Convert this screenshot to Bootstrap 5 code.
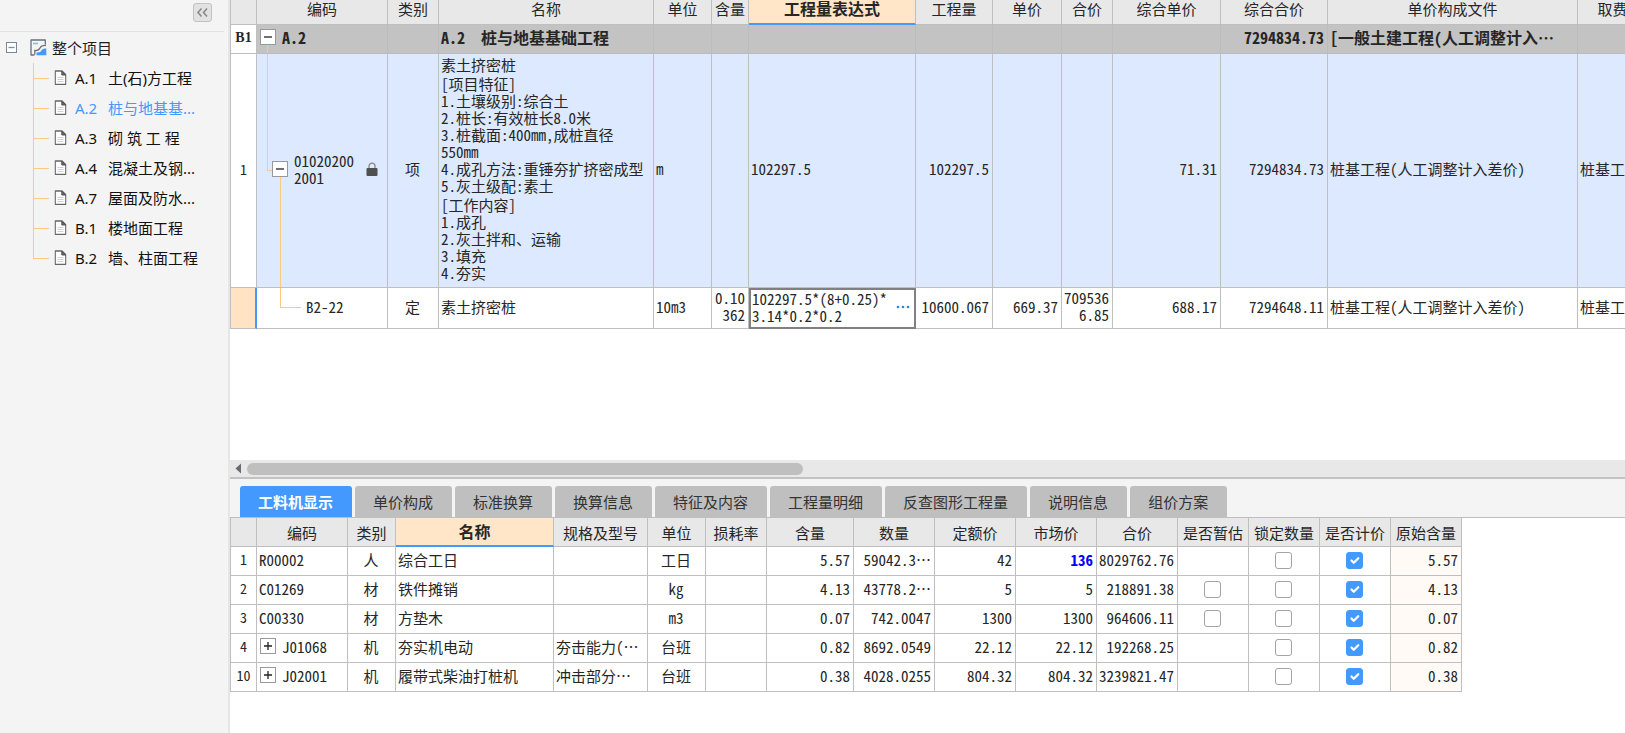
<!DOCTYPE html>
<html lang="zh-CN">
<head>
<meta charset="utf-8">
<meta name="viewport" content="width=device-width, initial-scale=1">
<title>工程量清单</title>
<link href="https://cdn.jsdelivr.net/npm/bootstrap@5.3.0/dist/css/bootstrap.min.css" rel="stylesheet">
<style>
  :root { --line: #bfbfbf; --accent: #4499ff; --pick: #ffe6c9; --twig: #ffc880; }
  body { font-family: "Noto Sans", "Noto Sans CJK SC", sans-serif; font-size: 15px; line-height: 20px; color: #1e1e1e; background: #fff; }

  /* project tree */
  .side { width: 230px; background: #f4f4f4; border-right: 2px solid #e6e6e6; }
  .side-head { height: 32px; margin-right: 4px; border-bottom: 1px solid #e2e2e2; padding: 3px 12px 0 0; }
  .fold { width: 19px; height: 19px; padding: 0; border: 1px solid #c2c2c2; border-radius: 3px; background: #e2e2e2; line-height: 0; }
  .tree-root { height: 31px; padding-left: 6px; }
  .tree-root button { width: 11px; height: 11px; padding: 0; border: 1px solid #7d8794; background: #fff; line-height: 0; }
  .tree-root svg.project { margin: 0 5px 0 13px; }
  .tree { margin: 0 0 0 33px; }
  .tree li { position: relative; height: 30px; padding-left: 21px; }
  .tree li::before { content: ""; position: absolute; left: 0; top: 0; bottom: 0; border-left: 1px solid var(--twig); }
  .tree li:last-child::before { bottom: 50%; }
  .tree li::after { content: ""; position: absolute; left: 0; top: 50%; width: 16px; border-top: 1px solid var(--twig); }
  .tree a { color: #111; text-decoration: none; }
  .tree a.current { color: var(--accent); }
  .tree .code { width: 33px; }

  /* data grids */
  .sheet { table-layout: fixed; border-collapse: separate; border-spacing: 0; font-family: "Noto Sans CJK SC", sans-serif; font-feature-settings: "hwid" 1; line-height: 17px; color: #262626; }
  .sheet th, .sheet td { border: 0 solid var(--line); border-width: 0 1px 1px 0; padding: 0 3px 4px 2px; overflow: hidden; white-space: nowrap; vertical-align: middle; }
  .sheet th:first-child { border-left-width: 1px; padding: 0 0 3px; text-align: center; }
  .sheet thead th { background: #e8e8e8; font-weight: 400; text-align: center; padding: 0; }
  .sheet thead th.picked { background: var(--pick); font-weight: 700; font-size: 16px; border-bottom: 2px solid var(--accent); }
  .sheet tbody th { background: #fff; font-weight: 400; font-size: 14px; }
  .sheet .wrap { white-space: normal; word-break: break-all; }
  .bill { width: 1448px; }
  .bill thead tr { height: 25px; }
  .bill thead th { vertical-align: top; }
  .bill .branch { height: 29px; font-size: 16px; font-weight: 700; }
  .bill .branch td { background: #c3c3c3; border-color: #bcbcbc; }
  .bill .branch th { font-family: "Liberation Serif", serif; font-weight: 700; }
  .bill .item { height: 234px; }
  .bill .item td { background: #dce9fe; }
  .bill .norm { height: 41px; }
  .bill .norm th { background: #ffe3c3; border-right: 2px solid var(--accent); }
  .bill .norm .editing { border: 2px solid #808080; padding: 0 2px 3px 1px; }
  .more { border: 0; background: none; padding: 0 2px; color: #2f86d6; line-height: 0; }
  .res { width: 1232px; }
  .res tr { height: 29px; }
  .res .base { background: #fffaf5; }
  .res .form-check-input { width: 17px; height: 17px; margin: 0; border-color: #a3a3a3; border-radius: 3px; vertical-align: middle; }
  .res .form-check-input:checked { background-color: var(--accent); border-color: var(--accent); }
  .knob { width: 16px; height: 16px; margin: 0 6px 0 1px; padding: 0; border: 1px solid #999; background: #fff; line-height: 0; flex: none; position: relative; z-index: 1; }
  td.limb { position: relative; }
  .twig { position: absolute; border: 0 solid var(--twig); border-left-width: 1px; }
  .twig-a { left: 10px; top: 50%; bottom: 0; }
  .twig-b { left: 10px; top: 0; bottom: 50%; width: 8px; border-bottom-width: 1px; }
  .twig-c { left: 23px; top: 50%; bottom: 0; }
  .twig-d { left: 23px; top: 0; bottom: 50%; width: 21px; border-bottom-width: 1px; }
  .lv2 { padding-left: 12px; }
  .lv3 { padding-left: 47px; }
  .digits { width: 64px; }
  .clauses { gap: 2px; }

  /* horizontal scroll strip and tabs */
  .strip { height: 19px; background: #e8e8e8; border-bottom: 2px solid #c2c2c2; padding-left: 4px; gap: 2px; }
  .thumb { width: 40%; height: 12px; border-radius: 6px; background: #bfbfbf; }
  .pane { min-height: 254px; }
  .tabs { background: #f4f4f4; border-bottom: 1px solid var(--line); padding: 7px 0 0 10px; gap: 3px; }
  .tabs button { height: 31px; border: 0; border-radius: 3px 3px 0 0; background: #bfbfbf; color: #333; padding: 0 19px 0 18px; }
  .tabs button.active { background: var(--accent); color: #fff; font-weight: 700; }
</style>
</head>
<body>
<div class="d-flex vh-100 overflow-hidden">
  <nav class="side flex-shrink-0" aria-label="项目结构">
    <div class="side-head d-flex justify-content-end align-items-start">
      <button class="fold" type="button" aria-label="收起">
        <svg width="15" height="15" viewBox="0 0 15 15" fill="none" stroke="#8a8a8a" stroke-width="1.6"><path d="M6.500 3.500 3 7.500l3.500 4M12 3.500 8.500 7.500l3.500 4"/></svg>
      </button>
    </div>
    <div class="tree-root d-flex align-items-center">
      <button type="button" aria-label="折叠"><svg width="9" height="9" viewBox="0 0 9 9"><path d="M1.500 4.500h6" stroke="#3aa0e8" stroke-width="1.300"/></svg></button>
      <svg class="project" width="17" height="17" viewBox="0 0 17 17" fill="none"><path d="M15.300 5.500V1H1v15h3.500" stroke="#6b7078" stroke-width="1.300" stroke-linejoin="round"/><path d="M3 4.500h5" stroke="#7cc0ff" stroke-width="1.600"/><path d="M4.800 15.500V11.500q4 .3 5.200-2.500t6-2.500" stroke="#6b7078" stroke-width="1.300"/><path d="M6.500 16.300v-2.800q4.200.3 5.200-2.500 1.200-2 4.600-1.500v6.800z" fill="#4499ff"/></svg>
      <span>整个项目</span>
    </div>
    <ul class="tree list-unstyled">
      <li class="d-flex align-items-center"><svg class="me-2" width="13" height="16" viewBox="0 0 12 16"><use href="#doc"/></svg><a class="d-flex" href="#"><span class="code">A.1</span><span>土(石)方工程</span></a></li>
      <li class="d-flex align-items-center"><svg class="me-2" width="13" height="16" viewBox="0 0 12 16"><use href="#doc"/></svg><a class="d-flex current" href="#"><span class="code">A.2</span><span>桩与地基基...</span></a></li>
      <li class="d-flex align-items-center"><svg class="me-2" width="13" height="16" viewBox="0 0 12 16"><use href="#doc"/></svg><a class="d-flex" href="#"><span class="code">A.3</span><span>砌 筑 工 程</span></a></li>
      <li class="d-flex align-items-center"><svg class="me-2" width="13" height="16" viewBox="0 0 12 16"><use href="#doc"/></svg><a class="d-flex" href="#"><span class="code">A.4</span><span>混凝土及钢...</span></a></li>
      <li class="d-flex align-items-center"><svg class="me-2" width="13" height="16" viewBox="0 0 12 16"><use href="#doc"/></svg><a class="d-flex" href="#"><span class="code">A.7</span><span>屋面及防水...</span></a></li>
      <li class="d-flex align-items-center"><svg class="me-2" width="13" height="16" viewBox="0 0 12 16"><use href="#doc"/></svg><a class="d-flex" href="#"><span class="code">B.1</span><span>楼地面工程</span></a></li>
      <li class="d-flex align-items-center"><svg class="me-2" width="13" height="16" viewBox="0 0 12 16"><use href="#doc"/></svg><a class="d-flex" href="#"><span class="code">B.2</span><span>墙、柱面工程</span></a></li>
    </ul>
    <svg class="d-none">
      <symbol id="doc" viewBox="0 0 12 16"><path d="M.7 1h6.800l3.800 3.800v9.500H.7z" fill="#fff" stroke="#666" stroke-width="1.300" stroke-linejoin="round"/><path d="M7.300 1v4h4z" fill="#666" stroke="#555"/><path d="M3 7.500h6M3 9.500h6M3 11.500h6" stroke="#d0d0d0"/></symbol>
    </svg>
  </nav>

  <main class="d-flex flex-column flex-grow-1 overflow-hidden">
    <section class="flex-grow-1 overflow-hidden">
      <table class="sheet bill">
        <colgroup><col style="width:27px"><col style="width:131px"><col style="width:51px"><col style="width:215px"><col style="width:58px"><col style="width:37px"><col style="width:167px"><col style="width:77px"><col style="width:69px"><col style="width:51px"><col style="width:108px"><col style="width:107px"><col style="width:250px"><col style="width:100px"></colgroup>
        <thead>
          <tr><th></th><th>编码</th><th>类别</th><th>名称</th><th>单位</th><th>含量</th><th class="picked">工程量表达式</th><th>工程量</th><th>单价</th><th>合价</th><th>综合单价</th><th>综合合价</th><th>单价构成文件</th><th>取费专业</th></tr>
        </thead>
        <tbody>
          <tr class="branch">
            <th>B1</th>
            <td class="limb"><span class="twig twig-a"></span><div class="d-flex align-items-center"><button class="knob" type="button" aria-label="折叠"><svg width="14" height="14" viewBox="0 0 14 14"><path d="M3 7h8" stroke="#222" stroke-width="1.300"/></svg></button><span>A.2</span></div></td>
            <td></td><td>A.2&nbsp;&nbsp;桩与地基基础工程</td><td></td><td></td><td></td><td></td><td></td><td></td><td></td>
            <td class="text-end">7294834.73</td><td>[一般土建工程(人工调整计入⋯</td><td></td>
          </tr>
          <tr class="item">
            <th>1</th>
            <td class="limb"><span class="twig twig-b"></span><span class="twig twig-c"></span><div class="lv2 d-flex align-items-center"><button class="knob" type="button" aria-label="折叠"><svg width="14" height="14" viewBox="0 0 14 14"><path d="M3 7h8" stroke="#222" stroke-width="1.300"/></svg></button><span class="digits wrap">010202002001</span><svg class="ms-2" width="12" height="14" viewBox="0 0 12 14"><path d="M3 7V4.200a3 3 0 0 1 6 0V7" fill="none" stroke="#888" stroke-width="1.300"/><rect x=".5" y="6" width="11" height="8" rx="1" fill="#505050"/></svg></div></td>
            <td class="text-center">项</td>
            <td class="wrap"><div class="clauses d-grid"><div>素土挤密桩</div><div>[项目特征]<br>1.土壤级别:综合土<br>2.桩长:有效桩长8.0米<br>3.桩截面:400mm,成桩直径<br>550mm<br>4.成孔方法:重锤夯扩挤密成型<br>5.灰土级配:素土</div><div>[工作内容]<br>1.成孔<br>2.灰土拌和、运输<br>3.填充<br>4.夯实</div></div></td>
            <td>m</td><td></td><td>102297.5</td><td class="text-end">102297.5</td><td></td><td></td>
            <td class="text-end">71.31</td><td class="text-end">7294834.73</td><td>桩基工程(人工调整计入差价)</td><td>桩基工程</td>
          </tr>
          <tr class="norm">
            <th></th>
            <td class="limb"><span class="twig twig-d"></span><div class="lv3">B2-22</div></td>
            <td class="text-center">定</td><td>素土挤密桩</td><td>10m3</td><td class="wrap text-end">0.10362</td>
            <td class="editing"><div class="d-flex align-items-center justify-content-between"><span>102297.5*(8+0.25)*<br>3.14*0.2*0.2</span><button class="more" type="button" aria-label="编辑表达式"><svg width="14" height="4" viewBox="0 0 14 4" fill="currentColor"><circle cx="2" cy="2" r="1.300"/><circle cx="7" cy="2" r="1.300"/><circle cx="12" cy="2" r="1.300"/></svg></button></div></td>
            <td class="text-end">10600.067</td><td class="text-end">669.37</td><td class="wrap text-end">7095366.85</td>
            <td class="text-end">688.17</td><td class="text-end">7294648.11</td><td>桩基工程(人工调整计入差价)</td><td>桩基工程</td>
          </tr>
        </tbody>
      </table>
    </section>

    <div class="strip d-flex align-items-center flex-shrink-0">
      <svg width="11" height="11" viewBox="0 0 11 11" class="flex-shrink-0"><path d="M7 .5v10L1.500 5.500z" fill="#666b75"/></svg>
      <div class="thumb"></div>
    </div>

    <section class="pane flex-shrink-0">
      <div class="tabs d-flex" role="tablist">
        <button class="active" type="button" role="tab">工料机显示</button>
        <button type="button" role="tab">单价构成</button>
        <button type="button" role="tab">标准换算</button>
        <button type="button" role="tab">换算信息</button>
        <button type="button" role="tab">特征及内容</button>
        <button type="button" role="tab">工程量明细</button>
        <button type="button" role="tab">反查图形工程量</button>
        <button type="button" role="tab">说明信息</button>
        <button type="button" role="tab">组价方案</button>
      </div>
      <table class="sheet res">
        <colgroup><col style="width:27px"><col style="width:91px"><col style="width:48px"><col style="width:158px"><col style="width:94px"><col style="width:58px"><col style="width:61px"><col style="width:87px"><col style="width:81px"><col style="width:81px"><col style="width:81px"><col style="width:81px"><col style="width:71px"><col style="width:71px"><col style="width:71px"><col style="width:71px"></colgroup>
        <thead>
          <tr><th></th><th>编码</th><th>类别</th><th class="picked">名称</th><th>规格及型号</th><th>单位</th><th>损耗率</th><th>含量</th><th>数量</th><th>定额价</th><th>市场价</th><th>合价</th><th id="c-est">是否暂估</th><th id="c-lock">锁定数量</th><th id="c-cost">是否计价</th><th>原始含量</th></tr>
        </thead>
        <tbody>
          <tr><th>1</th><td>R00002</td><td class="text-center">人</td><td>综合工日</td><td></td><td class="text-center">工日</td><td></td><td class="text-end">5.57</td><td class="text-end">59042.3⋯</td><td class="text-end">42</td><td class="text-end fw-bold" style="color:#00f">136</td><td class="text-end">8029762.76</td><td></td><td class="text-center"><input class="form-check-input" type="checkbox" aria-labelledby="c-lock"></td><td class="text-center"><input class="form-check-input" type="checkbox" aria-labelledby="c-cost" checked></td><td class="text-end base">5.57</td></tr>
          <tr><th>2</th><td>C01269</td><td class="text-center">材</td><td>铁件摊销</td><td></td><td class="text-center">kg</td><td></td><td class="text-end">4.13</td><td class="text-end">43778.2⋯</td><td class="text-end">5</td><td class="text-end">5</td><td class="text-end">218891.38</td><td class="text-center"><input class="form-check-input" type="checkbox" aria-labelledby="c-est"></td><td class="text-center"><input class="form-check-input" type="checkbox" aria-labelledby="c-lock"></td><td class="text-center"><input class="form-check-input" type="checkbox" aria-labelledby="c-cost" checked></td><td class="text-end base">4.13</td></tr>
          <tr><th>3</th><td>C00330</td><td class="text-center">材</td><td>方垫木</td><td></td><td class="text-center">m3</td><td></td><td class="text-end">0.07</td><td class="text-end">742.0047</td><td class="text-end">1300</td><td class="text-end">1300</td><td class="text-end">964606.11</td><td class="text-center"><input class="form-check-input" type="checkbox" aria-labelledby="c-est"></td><td class="text-center"><input class="form-check-input" type="checkbox" aria-labelledby="c-lock"></td><td class="text-center"><input class="form-check-input" type="checkbox" aria-labelledby="c-cost" checked></td><td class="text-end base">0.07</td></tr>
          <tr><th>4</th><td><div class="d-flex align-items-center"><button class="knob" type="button" aria-label="展开"><svg width="14" height="14" viewBox="0 0 14 14"><path d="M3 7h8M7 3v8" stroke="#222" stroke-width="1.300"/></svg></button><span>J01068</span></div></td><td class="text-center">机</td><td>夯实机电动</td><td>夯击能力(⋯</td><td class="text-center">台班</td><td></td><td class="text-end">0.82</td><td class="text-end">8692.0549</td><td class="text-end">22.12</td><td class="text-end">22.12</td><td class="text-end">192268.25</td><td></td><td class="text-center"><input class="form-check-input" type="checkbox" aria-labelledby="c-lock"></td><td class="text-center"><input class="form-check-input" type="checkbox" aria-labelledby="c-cost" checked></td><td class="text-end base">0.82</td></tr>
          <tr><th>10</th><td><div class="d-flex align-items-center"><button class="knob" type="button" aria-label="展开"><svg width="14" height="14" viewBox="0 0 14 14"><path d="M3 7h8M7 3v8" stroke="#222" stroke-width="1.300"/></svg></button><span>J02001</span></div></td><td class="text-center">机</td><td>履带式柴油打桩机</td><td>冲击部分⋯</td><td class="text-center">台班</td><td></td><td class="text-end">0.38</td><td class="text-end">4028.0255</td><td class="text-end">804.32</td><td class="text-end">804.32</td><td class="text-end">3239821.47</td><td></td><td class="text-center"><input class="form-check-input" type="checkbox" aria-labelledby="c-lock"></td><td class="text-center"><input class="form-check-input" type="checkbox" aria-labelledby="c-cost" checked></td><td class="text-end base">0.38</td></tr>
        </tbody>
      </table>
    </section>
  </main>
</div>
<script src="https://cdn.jsdelivr.net/npm/bootstrap@5.3.0/dist/js/bootstrap.bundle.min.js"></script>
</body>
</html>
